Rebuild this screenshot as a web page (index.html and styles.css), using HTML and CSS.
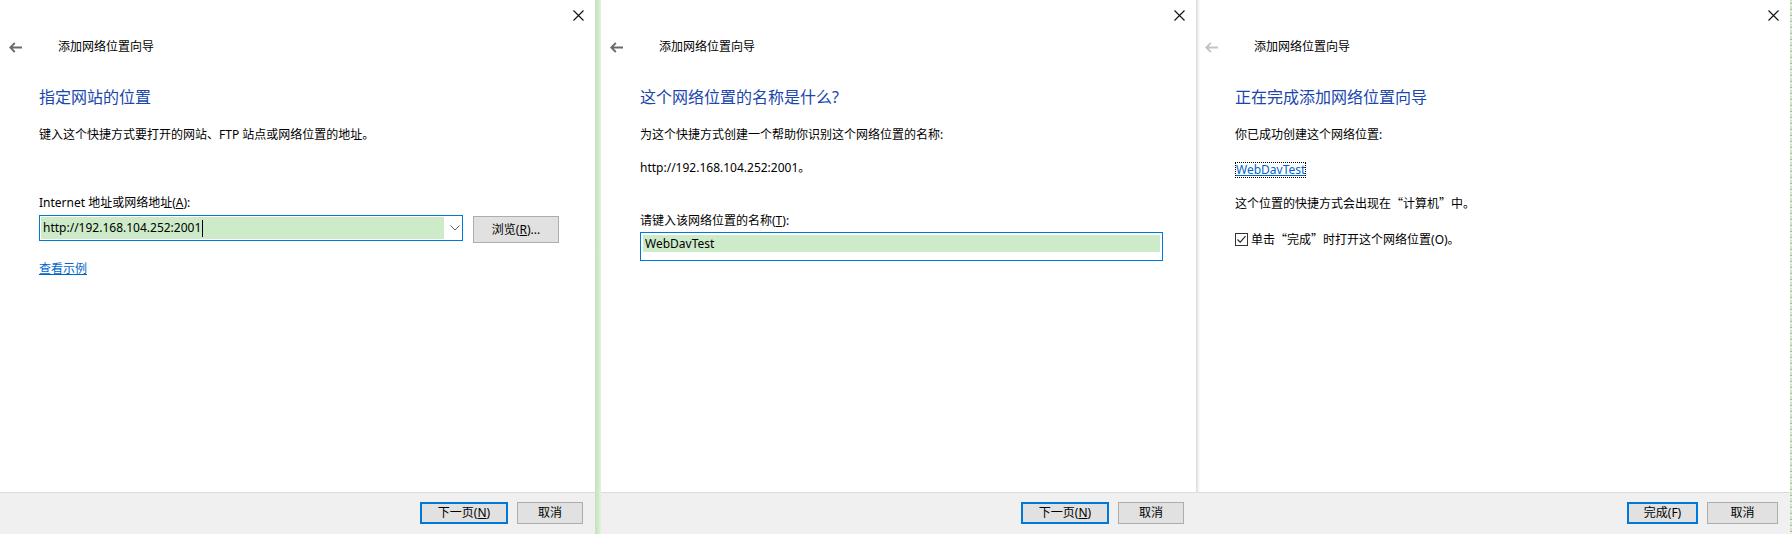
FILE: index.html
```html
<!DOCTYPE html>
<html lang="zh-CN">
<head>
<meta charset="utf-8">
<title>添加网络位置向导</title>
<link rel="stylesheet" href="styles.css">
</head>
<body>
<div class="screen">
  <section class="wizard">
    <div class="titlebar">
      <svg class="close" width="11" height="11" viewBox="0 0 11 11"><path d="M0.5 0.5 L10.5 10.5 M10.5 0.5 L0.5 10.5" stroke="#111" stroke-width="1.1" fill="none"/></svg>
    </div>
    <div class="header">
      <svg class="back" width="14" height="11" viewBox="0 0 14 11"><path d="M1.2 5.5 H13 M5.8 1 L1.2 5.5 L5.8 10" stroke="#6a6a6a" stroke-width="1.8" fill="none"/></svg>
      <span class="wtitle">添加网络位置向导</span>
    </div>
    <div class="content">
      <h1 class="heading">指定网站的位置</h1>
      <p class="text desc">键入这个快捷方式要打开的网站、FTP 站点或网络位置的地址。</p>
      <p class="text field-label">Internet 地址或网络地址(<u>A</u>):</p>
      <div class="combo-row">
        <div class="combo">
          <div class="combo-hl"><span class="combo-text">http://192.168.104.252:2001</span><span class="caret"></span></div>
          <svg class="chevron" width="10" height="6" viewBox="0 0 10 6"><path d="M0.5 0.5 L5 5 L9.5 0.5" stroke="#606060" stroke-width="1" fill="none"/></svg>
        </div>
        <div class="btn btn-browse">浏览(<u>R</u>)...</div>
      </div>
      <p class="text link-line"><a class="link">查看示例</a></p>
    </div>
    <div class="footer">
      <div class="btn btn-primary btn-next">下一页(<u>N</u>)</div>
      <div class="btn btn-cancel">取消</div>
    </div>
  </section>

  <div class="sep-green"></div>

  <section class="wizard">
    <div class="titlebar">
      <svg class="close" width="11" height="11" viewBox="0 0 11 11"><path d="M0.5 0.5 L10.5 10.5 M10.5 0.5 L0.5 10.5" stroke="#111" stroke-width="1.1" fill="none"/></svg>
    </div>
    <div class="header">
      <svg class="back" width="14" height="11" viewBox="0 0 14 11"><path d="M1.2 5.5 H13 M5.8 1 L1.2 5.5 L5.8 10" stroke="#6a6a6a" stroke-width="1.8" fill="none"/></svg>
      <span class="wtitle">添加网络位置向导</span>
    </div>
    <div class="content">
      <h1 class="heading">这个网络位置的名称是什么?</h1>
      <p class="text desc">为这个快捷方式创建一个帮助你识别这个网络位置的名称:</p>
      <p class="text url-line">http://192.168.104.252:2001。</p>
      <p class="text name-label">请键入该网络位置的名称(<u>T</u>):</p>
      <div class="name-input">
        <div class="name-hl">WebDavTest</div>
      </div>
    </div>
    <div class="footer">
      <div class="btn btn-primary btn-next">下一页(<u>N</u>)</div>
      <div class="btn btn-cancel">取消</div>
    </div>
  </section>

  <section class="wizard wizard-last">
    <div class="titlebar">
      <svg class="close" width="11" height="11" viewBox="0 0 11 11"><path d="M0.5 0.5 L10.5 10.5 M10.5 0.5 L0.5 10.5" stroke="#111" stroke-width="1.1" fill="none"/></svg>
    </div>
    <div class="header">
      <svg class="back" width="14" height="11" viewBox="0 0 14 11"><path d="M1.2 5.5 H13 M5.8 1 L1.2 5.5 L5.8 10" stroke="#c4c4c4" stroke-width="1.8" fill="none"/></svg>
      <span class="wtitle">添加网络位置向导</span>
    </div>
    <div class="content">
      <h1 class="heading">正在完成添加网络位置向导</h1>
      <p class="text desc">你已成功创建这个网络位置:</p>
      <p class="text focus-line"><a class="link focus-link">WebDavTest</a></p>
      <p class="text info-line">这个位置的快捷方式会出现在<span class="q">“</span>计算机<span class="q">”</span>中。</p>
      <div class="text check-row">
        <svg class="checkbox" width="13" height="13" viewBox="0 0 13 13"><rect x="0.5" y="0.5" width="12" height="12" fill="#fff" stroke="#333" stroke-width="1"/><path d="M2.5 6.5 L5.2 9.2 L10.5 3.2" stroke="#222" stroke-width="1.1" fill="none"/></svg>
        <span>单击<span class="q">“</span>完成<span class="q">”</span>时打开这个网络位置(O)。</span>
      </div>
    </div>
    <div class="footer">
      <div class="btn btn-primary btn-finish">完成(F)</div>
      <div class="btn btn-cancel btn-cancel-wide">取消</div>
    </div>
  </section>

  <div class="sep-edge"></div>
</div>
</body>
</html>
```

FILE: styles.css
```css
* { box-sizing: border-box; }

html, body {
  margin: 0;
  padding: 0;
  background: #fff;
}

body {
  font-family: "Noto Sans", "Noto Sans CJK SC", sans-serif;
  font-size: 12px;
  color: #000;
  width: 1792px;
  height: 534px;
  overflow: hidden;
}

.screen {
  display: flex;
  width: 1792px;
  height: 534px;
}

.wizard {
  width: 595px;
  height: 534px;
  display: flex;
  flex-direction: column;
  background: #fff;
  flex: none;
}

.wizard-last {
  width: 594px;
  box-shadow: inset 4px 0 3px -2px rgba(0, 0, 0, 0.14);
}

.sep-green {
  width: 6px;
  flex: none;
  background: linear-gradient(to right, #c3e1ba, #d3ebcc 60%, #e2f2dd);
}

.sep-edge {
  width: 2px;
  flex: none;
  background: repeating-linear-gradient(to bottom, #cfe6c8 0 3px, #a9b89a 3px 4px, #e6efe0 4px 6px);
}

.titlebar {
  height: 30px;
  display: flex;
  align-items: center;
  justify-content: flex-end;
  padding-right: 11px;
  flex: none;
}

.close { display: block; }

.header {
  height: 34px;
  display: flex;
  align-items: center;
  flex: none;
}

.back {
  display: block;
  margin-left: 9px;
}

.wtitle {
  margin-left: 35px;
  font-size: 12px;
  line-height: 18px;
  color: #000;
}

.content {
  flex: 1;
  padding-left: 39px;
  padding-right: 12px;
}

.heading {
  margin: 22px 0 0;
  font-size: 16px;
  line-height: 22px;
  font-weight: normal;
  color: #1a46ad;
}

.text {
  margin: 0;
  font-size: 12px;
  line-height: 18px;
}

.q {
  font-family: "Noto Sans CJK SC", sans-serif;
  display: inline-block;
  width: 12px;
}

.q:first-child, .info-line .q:nth-of-type(1) {
  text-align: right;
}

.desc { margin-top: 18px; }

.field-label { margin-top: 50px; }

.combo-row {
  margin-top: 3px;
  display: flex;
  align-items: flex-start;
  gap: 10px;
}

.combo {
  width: 424px;
  height: 26px;
  border: 1px solid #0078d7;
  display: flex;
  align-items: stretch;
  padding: 1px;
  background: #fff;
}

.combo-hl {
  width: 403px;
  background: #cdebc8;
  display: flex;
  align-items: center;
  padding-left: 2px;
}

.combo-text {
  line-height: 18px;
}

.caret {
  width: 1px;
  height: 17px;
  background: #000;
  margin-left: 1px;
}

.chevron {
  display: block;
  margin: auto 0 auto 6px;
}

.btn {
  display: flex;
  align-items: center;
  justify-content: center;
  background: #e1e1e1;
  border: 1px solid #adadad;
  font-size: 12px;
  color: #000;
  line-height: 16px;
  flex: none;
}

.btn-browse {
  width: 86px;
  height: 27px;
  margin-top: 1px;
}

.link-line { margin-top: 17px; }

.link {
  color: #0066cc;
  text-decoration: underline;
}

.url-line { margin-top: 15px; }

.name-label { margin-top: 35px; }

.name-input {
  margin-top: 2px;
  width: 523px;
  height: 29px;
  border: 1px solid #0078d7;
  padding: 2px 2px 0;
  background: #fff;
}

.name-hl {
  height: 17px;
  background: #cdebc8;
  line-height: 17px;
  padding-left: 2px;
  font-size: 12px;
}

.focus-line {
  margin-top: 17px;
  height: 16px;
}

.focus-link {
  display: inline-block;
  height: 16px;
  line-height: 14px;
  border: 1px dotted #000;
}

.info-line { margin-top: 17px; }

.check-row {
  margin-top: 17px;
  display: flex;
  align-items: center;
  gap: 3px;
}

.checkbox { display: block; }

.footer {
  height: 42px;
  flex: none;
  background: #f0f0f0;
  border-top: 1px solid #dcdcdc;
  display: flex;
  justify-content: flex-end;
  align-items: flex-start;
  padding: 9px 12px 0 0;
  gap: 9px;
}

.footer .btn { height: 22px; }

.btn-primary {
  border: 2px solid #0078d7;
}

.btn-next { width: 88px; }

.btn-cancel { width: 66px; }

.btn-finish { width: 71px; }

.btn-cancel-wide { width: 71px; }
```
